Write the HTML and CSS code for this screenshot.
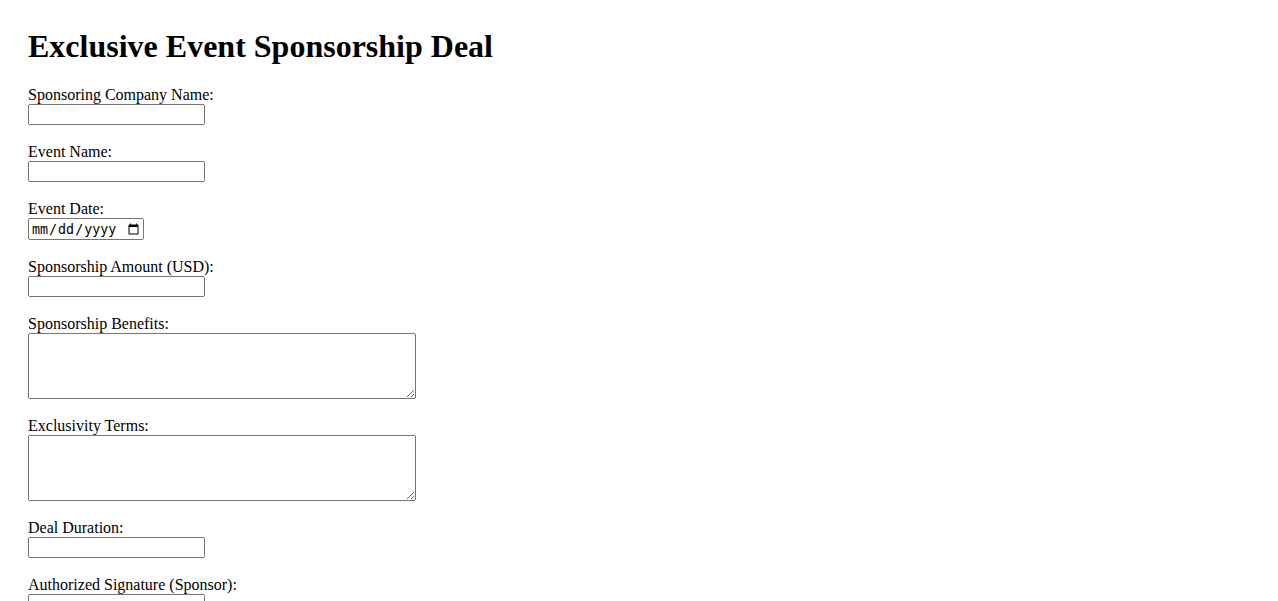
FILE: index.html
```html
<!DOCTYPE html>
<html>
<head>
<meta charset="utf-8">
<title>Exclusive Event Sponsorship Deal</title>
<link rel="stylesheet" href="styles.css">
</head>
<body>
<h1 class="title">Exclusive Event Sponsorship Deal</h1>
<form class="deal-form">
<label for="company">Sponsoring Company Name:</label><br>
<input type="text" id="company" class="text-field"><br><br>
<label for="event">Event Name:</label><br>
<input type="text" id="event" class="text-field"><br><br>
<label for="date">Event Date:</label><br>
<input type="date" id="date" class="date-field"><br><br>
<label for="amount">Sponsorship Amount (USD):</label><br>
<input type="number" id="amount" class="text-field"><br><br>
<label for="benefits">Sponsorship Benefits:</label><br>
<textarea id="benefits" class="area-field" rows="4" cols="50"></textarea><br><br>
<label for="exclusivity">Exclusivity Terms:</label><br>
<textarea id="exclusivity" class="area-field" rows="4" cols="50"></textarea><br><br>
<label for="duration">Deal Duration:</label><br>
<input type="text" id="duration" class="text-field"><br><br>
<label for="signature">Authorized Signature (Sponsor):</label><br>
<input type="text" id="signature" class="text-field"><br><br>
</form>
</body>
</html>
```
FILE: styles.css
```css
body {
  margin: 8px;
  padding: 20px;
  font-family: "Liberation Serif", "Times New Roman", serif;
  font-size: 16px;
  color: #000;
  background: #fff;
}
.title {
  margin: 0 0 21.44px;
  font-size: 32px;
  font-weight: bold;
}
.text-field {
  width: 177px;
  height: 21px;
  box-sizing: border-box;
}
.date-field {
  width: 116px;
  height: 22px;
  box-sizing: border-box;
}
.area-field {
  width: 388px;
  height: 66px;
  box-sizing: border-box;
  vertical-align: top;
}
```
